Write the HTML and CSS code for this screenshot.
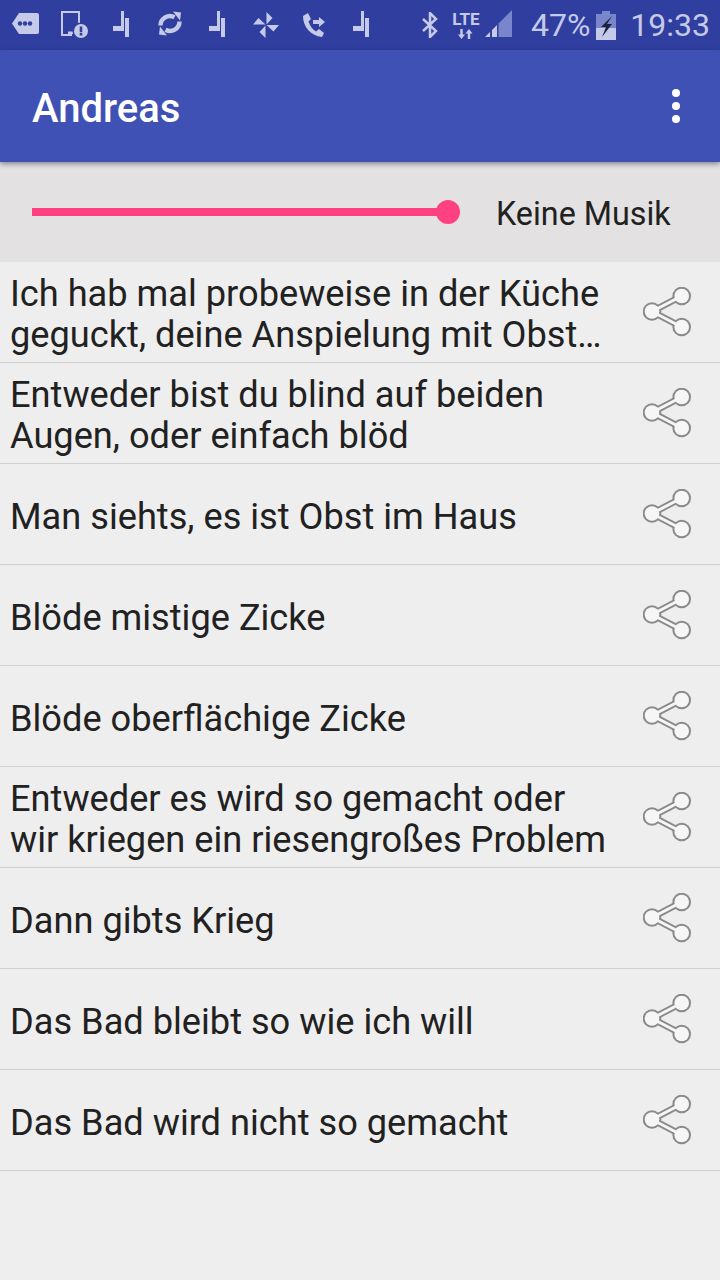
FILE: index.html
```html
<!DOCTYPE html>
<html lang="de">
<head>
<meta charset="utf-8">
<title>Andreas</title>
<link rel="stylesheet" href="styles.css">
</head>
<body>
<svg class="defs" width="0" height="0" aria-hidden="true">
  <symbol id="share" viewBox="0 0 50 50">
    <path d="M38.700 9 L9 24.500 L38.700 40" fill="none" stroke="#8a8a8a" stroke-width="6.600"/>
    <circle cx="38.700" cy="9" r="9.300" fill="#8a8a8a"/>
    <circle cx="38.700" cy="40" r="9.300" fill="#8a8a8a"/>
    <circle cx="9" cy="24.500" r="9.300" fill="#8a8a8a"/>
    <path d="M38.700 9 L9 24.500 L38.700 40" fill="none" stroke="#f6f6f6" stroke-width="3"/>
    <circle cx="38.700" cy="9" r="7.300" fill="#f6f6f6"/>
    <circle cx="38.700" cy="40" r="7.300" fill="#f6f6f6"/>
    <circle cx="9" cy="24.500" r="7.300" fill="#f6f6f6"/>
  </symbol>
  <symbol id="stub" viewBox="0 0 18 30">
    <path d="M8 1h3v20H0v-5h8z M12 8h4v19h-4z" fill="#c5cae9"/>
  </symbol>
</svg>
<div class="status">
  <div class="status-left">
    <div class="slot"><svg width="28" height="30" viewBox="0 0 28 30"><path d="M7 3h18a2 2 0 0 1 2 2v17a2 2 0 0 1-2 2H7L0 13.500z" fill="#c5cae9"/><circle cx="8" cy="13.500" r="2.200" fill="#303f9f"/><circle cx="13" cy="13.500" r="2.200" fill="#303f9f"/><circle cx="18" cy="13.500" r="2.200" fill="#303f9f"/></svg></div>
    <div class="slot"><svg width="28" height="30" viewBox="0 0 28 30"><path d="M1 1h19v16h-2V3H3v21h9v2H1z M8 21.500h5V24H8z" fill="#c5cae9"/><circle cx="21" cy="21" r="8.500" fill="#303f9f"/><circle cx="21" cy="21" r="7" fill="#c5cae9"/><path d="M19.700 16.500h2.600v5.800h-2.600z M19.700 23h2.600v2.500h-2.600z" fill="#303f9f"/></svg></div>
    <div class="slot"><svg width="18" height="30"><use href="#stub"/></svg></div>
    <div class="slot"><svg width="26" height="30" viewBox="0 0 26 30"><path d="M3.500 15.500a9.500 9.500 0 0 1 14-8.300" fill="none" stroke="#c5cae9" stroke-width="4.400"/><path d="M22.500 11.500a9.500 9.500 0 0 1-14 8.300" fill="none" stroke="#c5cae9" stroke-width="4.400"/><path d="M16 1.500l8 1-1 8z M10 25.500l-8-1 1-8z" fill="#c5cae9"/></svg></div>
    <div class="slot"><svg width="18" height="30"><use href="#stub"/></svg></div>
    <div class="slot"><svg width="26" height="30" viewBox="0 0 26 30"><path transform="translate(0 2)" d="M13.500 12.500V0l6 6z M13.500 13H26l-5.500 6.500z M12.500 13.500V26l-6-6z M12.500 12.500H0l5.500-6.500z" fill="#c5cae9"/></svg></div>
    <div class="slot"><svg width="24" height="30" viewBox="0 0 24 30"><path transform="translate(0 2)" d="M1 4l5-3 3 6-2.500 2.500C8 14 10 17 14 19.500l3-2.500 5 4-2 4C9 24 1 15 1 4z" fill="#c5cae9"/><path transform="translate(0 2)" d="M11 8h6V5l6 5-6 5v-3h-6z" fill="#c5cae9"/></svg></div>
    <div class="slot"><svg width="18" height="30"><use href="#stub"/></svg></div>
  </div>
  <div class="status-right">
    <svg class="ic" width="16" height="26" viewBox="0 0 16 26"><path d="M1 7l13 12-6 6V1l6 6L1 19" fill="none" stroke="#c5cae9" stroke-width="2.500"/></svg>
    <div class="net">
      <span class="lte">LTE</span>
      <svg class="ic" width="15" height="10" viewBox="0 0 15 10"><path d="M3.500 10L0 5.500h2.300V0h2.400v5.500H7z M11 0l3.500 4.500h-2.300V10H9.800V4.500H7.500z" fill="#c5cae9"/></svg>
    </div>
    <svg class="ic signal" width="27" height="27" viewBox="0 0 27 27"><path d="M27 0v27H13.500V13.500z" fill="#7986cb"/><path d="M7 20l5-5v12H7z M0 27l5-5v5z" fill="#c5cae9"/></svg>
    <span class="pct">47%</span>
    <svg class="ic" width="20" height="29" viewBox="0 0 20 29"><path d="M6 0h8v3h6v14H0V3h6z" fill="#7986cb"/><path d="M0 17h20v12H0z" fill="#c5cae9"/><path d="M16 5L5 16h5L6 26l10-13h-5z" fill="#1c2340"/></svg>
    <span class="time">19:33</span>
  </div>
</div>
<header class="appbar">
  <h1 class="title">Andreas</h1>
  <div class="more"><i></i><i></i><i></i></div>
</header>
<section class="player">
  <div class="track"><div class="thumb"></div></div>
  <span class="music">Keine Musik</span>
</section>
<ul class="list">
  <li class="row"><p class="text">Ich hab mal probeweise in der Küche geguckt, deine Anspielung mit Obst…</p><svg class="share"><use href="#share"/></svg></li>
  <li class="row"><p class="text">Entweder bist du blind auf beiden Augen, oder einfach blöd</p><svg class="share"><use href="#share"/></svg></li>
  <li class="row"><p class="text">Man siehts, es ist Obst im Haus</p><svg class="share"><use href="#share"/></svg></li>
  <li class="row"><p class="text">Blöde mistige Zicke</p><svg class="share"><use href="#share"/></svg></li>
  <li class="row"><p class="text">Blöde oberflächige Zicke</p><svg class="share"><use href="#share"/></svg></li>
  <li class="row"><p class="text">Entweder es wird so gemacht oder wir kriegen ein riesengroßes Problem</p><svg class="share"><use href="#share"/></svg></li>
  <li class="row"><p class="text">Dann gibts Krieg</p><svg class="share"><use href="#share"/></svg></li>
  <li class="row"><p class="text">Das Bad bleibt so wie ich will</p><svg class="share"><use href="#share"/></svg></li>
  <li class="row"><p class="text">Das Bad wird nicht so gemacht</p><svg class="share"><use href="#share"/></svg></li>
</ul>
</body>
</html>
```
FILE: styles.css
```css
* { box-sizing: border-box; }
html, body { margin: 0; padding: 0; }
body { width: 720px; height: 1280px; overflow: hidden; background: #eeeeee; font-family: Roboto, sans-serif; color: #212121; }
.defs { display: block; height: 0; }
.status { height: 50px; background: #303f9f; display: flex; justify-content: space-between; align-items: center; padding: 0 10px 0 2px; color: #c5cae9; }
.status-left { display: flex; align-items: center; }
.slot { width: 48px; height: 30px; display: flex; justify-content: center; }
.slot svg { display: block; flex: none; }
.status-right { display: flex; align-items: center; }
.ic { display: block; flex: none; }
.net { display: flex; flex-direction: column; align-items: center; margin-left: 14px; width: 28px; }
.lte { font-size: 17px; font-weight: 700; line-height: 14px; margin-bottom: 3px; }
.signal { margin-left: 5px; margin-top: -3px; }
.pct { font-size: 32px; margin-left: 19px; margin-right: 6px; }
.time { font-size: 32px; margin-left: 14px; }
.appbar { height: 112px; background: #3f51b5; display: flex; justify-content: space-between; align-items: center; padding: 0 40px 0 32px; box-shadow: 0 2px 5px rgba(0,0,0,.4); position: relative; }
.title { margin: 0; font-size: 40px; font-weight: 500; color: #fff; padding-top: 4px; }
.more { display: flex; flex-direction: column; gap: 5px; }
.more i { display: block; width: 8px; height: 8px; border-radius: 50%; background: #fff; }
.player { height: 100px; background: #e3e1e2; display: flex; align-items: center; padding: 0 0 0 32px; }
.track { width: 416px; height: 8px; background: #ff4081; position: relative; }
.thumb { position: absolute; right: -12px; top: -8px; width: 24px; height: 24px; border-radius: 50%; background: #ff4081; }
.music { font-size: 32.3px; margin-left: 48px; padding-top: 4px; }
.list { list-style: none; margin: 0; padding: 0; }
.row { height: 101px; border-bottom: 1px solid #cfcfcf; display: flex; align-items: center; padding-left: 10px; }
.text { margin: 0; width: 600px; font-size: 36.2px; line-height: 41px; flex: none; position: relative; top: 2px; }
.share { width: 50px; height: 50px; margin-left: 33px; flex: none; }
```
